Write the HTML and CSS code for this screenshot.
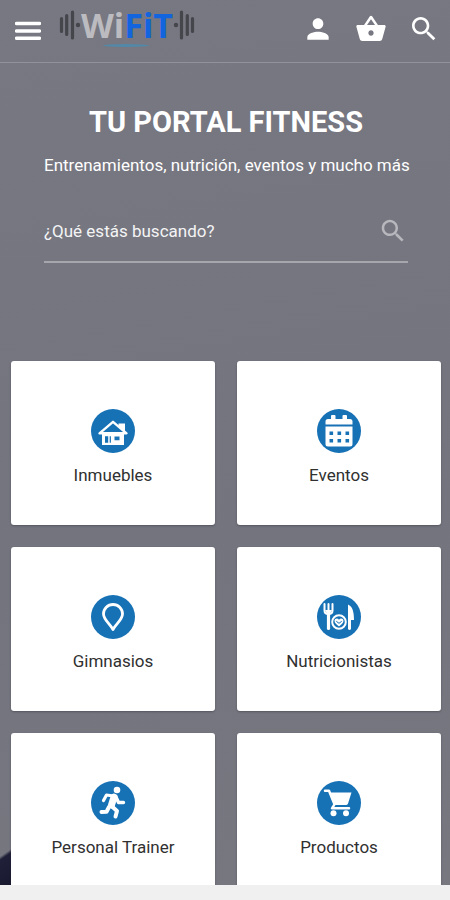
FILE: index.html
```html
<!DOCTYPE html>
<html lang="es">
<head>
<meta charset="utf-8">
<meta name="viewport" content="width=device-width, initial-scale=1">
<title>WiFiT</title>
<link rel="stylesheet" href="styles.css">
</head>
<body>
<div class="screen">
  <header class="topbar">
    <button class="icon-btn" type="button" aria-label="Menú">
      <svg class="menu-icon" viewBox="0 0 26 20"><path d="M1.5 2.5h23M1.5 10h23M1.5 17.3h23" stroke="currentColor" stroke-width="3.4" stroke-linecap="round"/></svg>
    </button>
    <a class="logo" href="#">
      <svg class="weight" viewBox="0 0 22 30"><path d="M2.5 8.500v13M7.700 5.500v19M13.500 2v26" stroke="currentColor" stroke-width="3.200" stroke-linecap="round"/><circle cx="19" cy="15" r="2.200" fill="currentColor"/></svg>
      <span class="logo-name"><span class="logo-wi">Wi</span><span class="logo-fit">FiT</span></span>
      <svg class="weight weight-right" viewBox="0 0 22 30"><path d="M2.500 8.500v13M7.700 5.500v19M13.500 2v26" stroke="currentColor" stroke-width="3.200" stroke-linecap="round"/><circle cx="19" cy="15" r="2.200" fill="currentColor"/></svg>
    </a>
    <nav class="actions">
      <a href="#" aria-label="Cuenta"><svg viewBox="0 0 24 24"><path fill="currentColor" d="M12 12c2.210 0 4-1.790 4-4s-1.790-4-4-4-4 1.790-4 4 1.790 4 4 4zm0 2c-2.670 0-8 1.340-8 4v2h16v-2c0-2.660-5.330-4-8-4z"/></svg></a>
      <a href="#" aria-label="Cesta"><svg viewBox="0 0 24 24"><path fill="currentColor" d="M17.210 9l-4.380-6.560c-.19-.28-.51-.42-.83-.42-.32 0-.64.140-.83.430L6.790 9H2c-.55 0-1 .45-1 1 0 .09.010.180.040.270l2.540 9.270c.23.840 1 1.460 1.920 1.460h13c.92 0 1.690-.62 1.930-1.460l2.540-9.270L23 10c0-.55-.45-1-1-1h-4.790zM9 9l3-4.400L15 9H9zm3 8c-1.100 0-2-.9-2-2s.9-2 2-2 2 .9 2 2-.9 2-2 2z"/></svg></a>
      <a href="#" aria-label="Buscar"><svg viewBox="0 0 24 24"><path fill="currentColor" d="M15.500 14h-.79l-.28-.27C15.410 12.590 16 11.110 16 9.500 16 5.910 13.090 3 9.500 3S3 5.910 3 9.500 5.910 16 9.500 16c1.610 0 3.090-.59 4.230-1.570l.27.280v.79l5 4.990L20.490 19l-4.990-5zm-6 0C7.010 14 5 11.990 5 9.500S7.010 5 9.500 5 14 7.010 14 9.500 11.990 14 9.500 14z"/></svg></a>
    </nav>
  </header>
  <main>
    <section class="intro">
      <h1>TU PORTAL FITNESS</h1>
      <p>Entrenamientos, nutrición, eventos y mucho más</p>
      <form class="search">
        <input type="search" placeholder="¿Qué estás buscando?" aria-label="¿Qué estás buscando?">
        <button type="submit" aria-label="Buscar"><svg viewBox="0 0 24 24"><path fill="currentColor" d="M15.500 14h-.79l-.28-.27C15.410 12.590 16 11.110 16 9.500 16 5.910 13.090 3 9.500 3S3 5.910 3 9.500 5.910 16 9.500 16c1.610 0 3.090-.59 4.230-1.570l.27.280v.79l5 4.990L20.490 19l-4.990-5zm-6 0C7.010 14 5 11.990 5 9.500S7.010 5 9.500 5 14 7.010 14 9.500 11.990 14 9.500 14z"/></svg></button>
      </form>
    </section>
    <nav class="cards">
      <a class="card" href="#">
        <svg viewBox="0 0 44 44"><circle cx="22" cy="22" r="22" fill="#1671b5"/><path d="M27.500 14.500H34v8l-6.500-5z" fill="#fff"/><path d="M8.500 24.300L22 12.800l13.500 11.500z" fill="none" stroke="#fff" stroke-width="2.400" stroke-linejoin="round"/><path d="M11 24h22v12H11z" fill="#fff"/><path d="M14 27.200h3.200v6.600H14zM18.700 27.200h1.200v6.600h-1.200zM23.500 27.500h5v3.800h-5z" fill="#1671b5"/></svg>
        <span>Inmuebles</span>
      </a>
      <a class="card" href="#">
        <svg viewBox="0 0 44 44"><circle cx="22" cy="22" r="22" fill="#1671b5"/><path d="M8.500 15.500v-3q0-2.500 2.500-2.500h3V7q0-1 1-1h2.500q1 0 1 1v3h7V7q0-1 1-1H29q1 0 1 1v3h3q2.500 0 2.500 2.500v3zM8.500 17.500h27V35q0 2.500-2.500 2.500H11q-2.500 0-2.500-2.500z" fill="#fff"/><path d="M12.500 22.500h3.600v3.600h-3.600zM20.500 22.500h3.600v3.600h-3.600zM28.500 22.500h3.600v3.600h-3.600zM12.500 30h3.600v3.600h-3.600zM20.500 30h3.600v3.600h-3.600zM28.500 30h3.600v3.600h-3.600z" fill="#1671b5"/></svg>
        <span>Eventos</span>
      </a>
      <a class="card" href="#">
        <svg viewBox="0 0 44 44"><circle cx="22" cy="22" r="22" fill="#1671b5"/><path d="M22 34.500C19 29 12.500 24.500 12.500 19a9.500 9.500 0 0 1 19 0C31.500 24.500 25 29 22 34.500z" fill="none" stroke="#fff" stroke-width="2.800" stroke-linejoin="round"/></svg>
        <span>Gimnasios</span>
      </a>
      <a class="card" href="#">
        <svg viewBox="0 0 44 44"><circle cx="22" cy="22" r="22" fill="#1671b5"/><path d="M7.500 9v6.500q0 3.500 4 3.500t4-3.500V9M11.500 9v9" fill="none" stroke="#fff" stroke-width="2" stroke-linecap="round"/><path d="M8 15h7l-2 4h-3z" fill="#fff"/><path d="M11.500 18v15.500" stroke="#fff" stroke-width="3.200" stroke-linecap="round"/><path d="M31 9.500c4.500 2 6 7 6 15.500h-3v9q-1.500 2-3 0z" fill="#fff"/><circle cx="22" cy="27" r="6.800" fill="none" stroke="#fff" stroke-width="2"/><path d="M22 31.500c-1.800-1.600-4.500-3.400-4.500-5.500 0-2.600 3.200-3.200 4.500-1.200 1.300-2 4.500-1.400 4.500 1.200 0 2.100-2.700 3.900-4.500 5.500z" fill="#fff"/><path d="M19.300 26.300l2.700 2 2.700-2" fill="none" stroke="#1671b5"/></svg>
        <span>Nutricionistas</span>
      </a>
      <a class="card" href="#">
        <svg viewBox="0 0 44 44"><circle cx="22" cy="22" r="22" fill="#1671b5"/><circle cx="26" cy="9" r="3.300" fill="#fff"/><g fill="none" stroke="#fff" stroke-linecap="round" stroke-linejoin="round"><path d="M12.500 19.500l3-5.500 7 1" stroke-width="3.200"/><path d="M23 16l-2.500 8" stroke-width="7"/><path d="M25 16l2.500 5.500h5" stroke-width="3.400"/><path d="M21 25.500l5 4.500-1.500 5.500" stroke-width="4"/><path d="M18 26l-2.500 4.700-5 .3" stroke-width="4"/></g></svg>
        <span>Personal Trainer</span>
      </a>
      <a class="card" href="#">
        <svg viewBox="0 0 44 44"><circle cx="22" cy="22" r="22" fill="#1671b5"/><path d="M8 9.800h4l5.500 13.500-2.500 4h17" fill="none" stroke="#fff" stroke-width="2.500" stroke-linecap="round" stroke-linejoin="round"/><path d="M12.500 11.500h22L31 22.500q-.6 1.500-2 1.500H17.500z" fill="#fff"/><circle cx="16.500" cy="32.300" r="3" fill="#fff"/><circle cx="29" cy="32.300" r="3" fill="#fff"/></svg>
        <span>Productos</span>
      </a>
    </nav>
  </main>
</div>
</body>
</html>
```
FILE: styles.css
```css
* { box-sizing: border-box; }

body {
  margin: 0;
  background: #f0f0f0;
  font-family: Roboto, "Liberation Sans", sans-serif;
  color: #fff;
}

a { color: inherit; text-decoration: none; }
svg { display: block; }

button {
  padding: 0;
  border: 0;
  background: none;
  color: inherit;
}

.screen {
  height: calc(100vh - 15px);
  overflow: hidden;
  background:
    linear-gradient(145deg, transparent 16px, #202139 19px, #15162b) left bottom / 32px 48px no-repeat,
    linear-gradient(170deg, #777881, #74747e 60%, #777780);
}

.topbar {
  display: flex;
  align-items: center;
  height: 63px;
  padding: 0 10px 4px 15px;
  border-bottom: 1px solid #92929b;
}

.menu-icon { width: 26px; height: 20px; margin-top: 4px; }

.logo {
  display: flex;
  align-items: center;
  margin: -8px 0 0 18px;
  color: #45464c;
}

.weight { width: 22px; height: 30px; }
.weight-right { transform: scaleX(-1); }

.logo-name {
  position: relative;
  font-family: "Open Sans", sans-serif;
  font-size: 34px;
  font-weight: 700;
  line-height: 40px;
}

.logo-name::after {
  content: "";
  position: absolute;
  left: 24%;
  right: 26%;
  bottom: -2px;
  height: 3px;
  border-radius: 50%;
  background: #5288a8;
}

.logo-wi { color: #bcbcc0; }
.logo-fit { color: #1264df; }

.actions {
  display: flex;
  gap: 21px;
  margin-left: auto;
}

.actions svg { width: 32px; height: 32px; }

.intro {
  padding: 41px 42px 0 44px;
  text-align: center;
}

h1 {
  margin: 0;
  font-size: 29px;
  line-height: 36px;
  font-weight: 700;
  white-space: nowrap;
}

.intro p {
  margin: 14px 0 0;
  font-size: 17px;
  line-height: 22px;
  white-space: nowrap;
}

.search {
  display: flex;
  align-items: center;
  height: 62px;
  margin-top: 25px;
  border-bottom: 2px solid #a6a6ad;
}

.search input {
  flex: 1;
  min-width: 0;
  padding: 0;
  border: 0;
  outline: 0;
  background: none;
  color: #fff;
  font: 400 17px/24px Roboto, sans-serif;
}

.search input::placeholder { color: #f4f4f5; }
.search button { color: #b7b7bd; }
.search button svg { width: 30px; height: 30px; }

.cards {
  display: grid;
  grid-template-columns: 1fr 1fr;
  gap: 22px;
  padding: 98px 9px 0 11px;
}

.card {
  display: flex;
  flex-direction: column;
  align-items: center;
  gap: 11px;
  height: 164px;
  padding-top: 48px;
  border-radius: 3px;
  background: #fff;
  box-shadow: 0 1px 2px rgba(40, 40, 50, 0.4);
  color: #303030;
  font-size: 17px;
  line-height: 22px;
}

.card svg { width: 44px; height: 44px; }
```
